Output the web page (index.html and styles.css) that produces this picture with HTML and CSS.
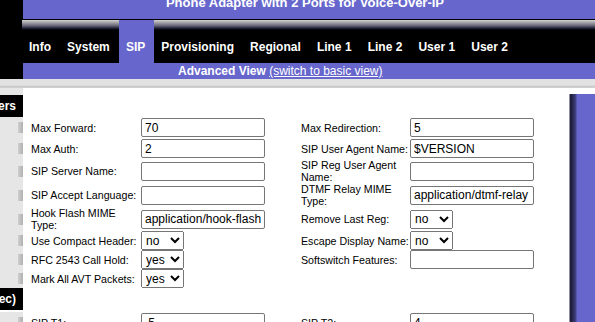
FILE: index.html
```html
<!DOCTYPE html>
<html lang="en">
<head>
    <meta charset="UTF-8">
    <title>SIP - Phone Adapter</title>
    <link rel="stylesheet" href="styles.css">
</head>
<body>

    <div class="banner">
        <div class="banner-side"></div>
        <div class="banner-main">
            <div class="title"><span>Phone Adapter with 2 Ports for Voice-Over-IP</span></div>
            <ul class="tabs">
                <li>Info</li>
                <li>System</li>
                <li class="active">SIP</li>
                <li>Provisioning</li>
                <li>Regional</li>
                <li>Line 1</li>
                <li>Line 2</li>
                <li>User 1</li>
                <li>User 2</li>
            </ul>
            <div class="subnav">Advanced View <a href="#">(switch to basic view)</a></div>
        </div>
    </div>

    <div class="shade"></div>

    <div class="content">
        <div class="form">
            <div class="row section first">
                <div class="side"><div class="bar">SIP Parameters</div></div>
            </div>

            <div class="row">
                <div class="side"></div>
                <label>Max Forward:</label>
                <div class="fld"><input type="text" value="70"></div>
                <label>Max Redirection:</label>
                <div class="fld"><input type="text" value="5"></div>
            </div>
            <div class="row">
                <div class="side"></div>
                <label>Max Auth:</label>
                <div class="fld"><input type="text" value="2"></div>
                <label>SIP User Agent Name:</label>
                <div class="fld"><input type="text" value="$VERSION"></div>
            </div>
            <div class="row">
                <div class="side"></div>
                <label>SIP Server Name:</label>
                <div class="fld"><input type="text" value=""></div>
                <label>SIP Reg User Agent Name:</label>
                <div class="fld"><input type="text" value=""></div>
            </div>
            <div class="row">
                <div class="side"></div>
                <label>SIP Accept Language:</label>
                <div class="fld"><input type="text" value=""></div>
                <label>DTMF Relay MIME Type:</label>
                <div class="fld"><input type="text" value="application/dtmf-relay"></div>
            </div>
            <div class="row">
                <div class="side"></div>
                <label>Hook Flash MIME Type:</label>
                <div class="fld"><input type="text" value="application/hook-flash"></div>
                <label>Remove Last Reg:</label>
                <div class="fld"><select><option>no</option><option>yes</option></select></div>
            </div>
            <div class="row compact">
                <div class="side"></div>
                <label>Use Compact Header:</label>
                <div class="fld"><select><option>no</option><option>yes</option></select></div>
                <label>Escape Display Name:</label>
                <div class="fld"><select><option>no</option><option>yes</option></select></div>
            </div>
            <div class="row compact">
                <div class="side"></div>
                <label>RFC 2543 Call Hold:</label>
                <div class="fld"><select><option>yes</option><option>no</option></select></div>
                <label>Softswitch Features:</label>
                <div class="fld"><input type="text" value=""></div>
            </div>
            <div class="row compact">
                <div class="side"></div>
                <label>Mark All AVT Packets:</label>
                <div class="fld"><select><option>yes</option><option>no</option></select></div>
                <label></label>
                <div class="fld"></div>
            </div>

            <div class="row section">
                <div class="side"><div class="bar">SIP Timer Values (sec)</div></div>
            </div>

            <div class="row spaced">
                <div class="side"></div>
                <label>SIP T1:</label>
                <div class="fld"><input type="text" value=".5"></div>
                <label>SIP T2:</label>
                <div class="fld"><input type="text" value="4"></div>
            </div>
        </div>
        <div class="deco"></div>
    </div>

</body>
</html>
```

FILE: styles.css
```css
body {
    margin: 0;
    font-family: "Liberation Sans", Arial, sans-serif;
    background-color: #e6e6e6;
    color: black;
    overflow: hidden;
}
/* header */
.banner {
    display: flex;
}
.banner-side {
    width: 23px;
    background-color: black;
}
.banner-main {
    flex: 1;
}
.title {
    height: 19px;
    overflow: hidden;
    background-color: #6666cc;
    border-bottom: 1px solid black;
    color: white;
    font-weight: bold;
    font-size: 13px;
    text-align: center;
    padding-right: 8px;
}
.title span {
    display: block;
    line-height: 13px;
    margin-top: -4px;
}
.tabs {
    display: flex;
    height: 43px;
    margin: 0 0 0 -1px;
    padding: 0;
    list-style: none;
    background: linear-gradient(#d4d4d4, #a4a4aa 25%, #6a6a7a 55%, #1a1a30 85%, #000) top / 100% 10px no-repeat, black;
}
.tabs li {
    display: flex;
    align-items: center;
    padding: 10px 9.1px 0 7px;
    color: white;
    font-weight: bold;
    font-size: 12px;
}
.tabs li.active {
    background-color: #6666cc;
}
.subnav {
    height: 16px;
    line-height: 16px;
    background-color: #6666cc;
    color: white;
    font-weight: bold;
    font-size: 12px;
    padding-left: 155px;
}
.subnav a {
    color: white;
    font-weight: normal;
}
.shade {
    height: 9px;
    background: linear-gradient(#e2e2e2 0, #e2e2e2 6px, #d2d2d2 7px, #c4c4c4 8px, #dadada 9px);
}
/* form panel */
.content {
    display: flex;
}
.form {
    width: 569px;
}
.deco {
    flex: 1;
    background: linear-gradient(90deg, #9090a0 0, #9090a0 1px, #1c1c36 1px, #232348 3px, #45458a 7px, #6666cc 8px) 0 6px / 100% 100% no-repeat, white;
}
.row {
    display: grid;
    grid-template-columns: 23px 118px 160px 109px 1fr;
    align-items: center;
    background-color: white;
}
.row .side {
    align-self: stretch;
    display: flex;
    justify-content: flex-end;
    align-items: center;
    background-color: #e6e6e6;
}
.row .side::after {
    content: "";
    width: 5px;
    height: 11px;
    background: linear-gradient(90deg, #cfcfcf, #b0b0b0);
}
.row.section .side::after {
    display: none;
}
.row.section .side {
    display: block;
}
.row.section.first .side {
    padding-top: 7px;
}
.bar {
    display: flex;
    justify-content: flex-end;
    align-items: center;
    height: 22px;
    padding-right: 7px;
    overflow: hidden;
    white-space: nowrap;
    background-color: black;
    color: white;
    font-weight: bold;
    font-size: 12px;
}
label {
    font-size: 10.67px;
    line-height: 12px;
}
.row > label:nth-of-type(1) {
    padding-left: 8px;
}
.fld {
    display: flex;
}
input {
    box-sizing: border-box;
    width: 124px;
    height: 19px;
    margin: 1px 0;
    padding: 0 3px;
    border: 1px solid #767676;
    border-radius: 2px;
    font-family: "Liberation Sans", Arial, sans-serif;
    font-size: 12px;
    color: black;
}
select {
    box-sizing: border-box;
    width: 43px;
    height: 19px;
    margin: 0;
    font-family: "Liberation Sans", Arial, sans-serif;
    font-size: 12px;
    color: black;
}
.row.compact input {
    margin: 0;
}
.row.spaced {
    padding-top: 2px;
}
```
